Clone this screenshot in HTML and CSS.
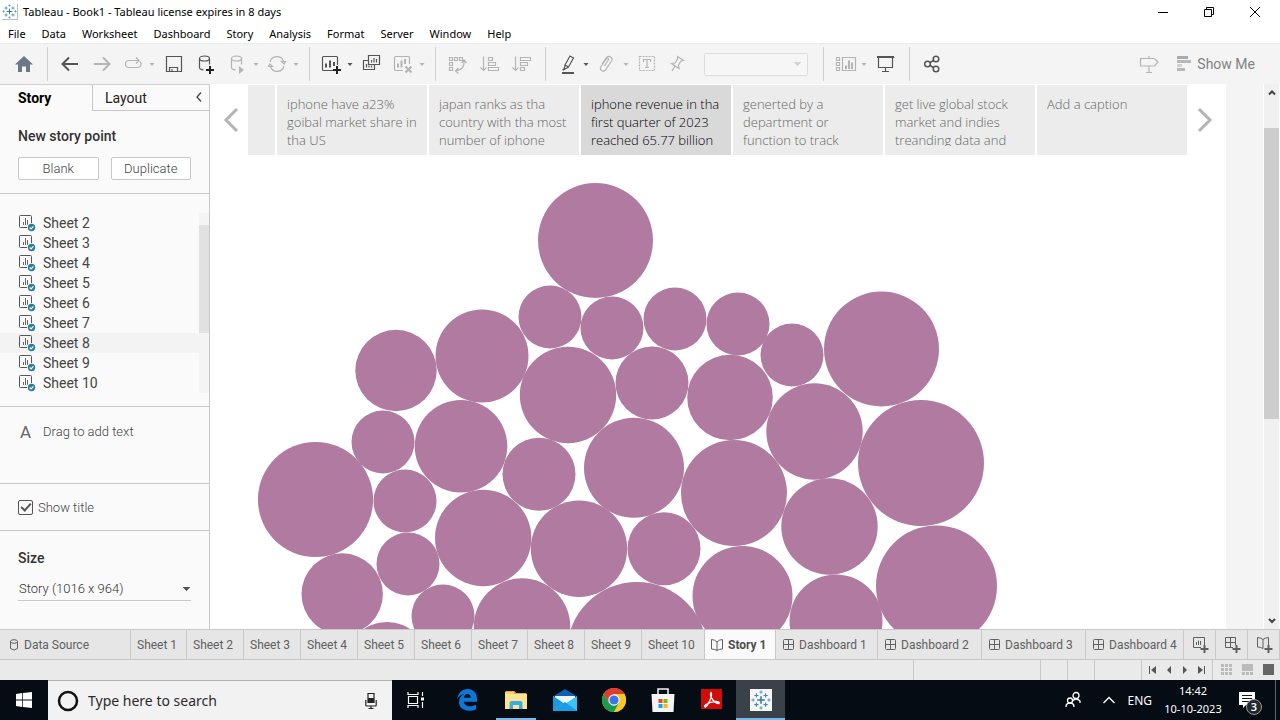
FILE: index.html
```html
<!DOCTYPE html>
<html lang="en">
<head>
<meta charset="utf-8">
<title>Tableau - Book1</title>
<link rel="stylesheet" href="styles.css">
</head>
<body>
<svg class="defs" aria-hidden="true">
  <defs>
    <symbol id="caret" viewBox="0 0 12 32"><path d="M3.500 15h5L6 18z" fill="currentColor"/></symbol>
    <symbol id="sheet" viewBox="0 0 18 18"><rect x="1.500" y="1.500" width="12" height="12" rx="1" fill="none" stroke="#555"/><path d="M5.500 8v3M7.500 4v7M9.500 6v5" stroke="#666" fill="none"/><circle cx="13.500" cy="13.500" r="4.500" fill="#fafafa"/><circle cx="13.500" cy="13.500" r="3.700" fill="#2f7d9e"/><path d="M11.700 13.500l1.400 1.400 2.300-2.500" fill="none" stroke="#fff" stroke-width="1.200"/></symbol>
    <symbol id="dash" viewBox="0 0 12 12"><rect x=".5" y=".5" width="10" height="10" rx="1"/><path d="M5.500 .5v10M.5 5.500h10"/></symbol>
    <symbol id="book" viewBox="0 0 12 12"><path d="M.5 .5q3 0 5.500 2.500Q8.500.5 11.500.5v9.500Q8.500 10 6 11.500 3.500 10 .5 10zM6 3v8.500"/></symbol>
    <symbol id="mark" viewBox="0 0 24 24"><g fill="none"><path d="M12 7.500v9M7.500 12h9" stroke="#2a7aa8" stroke-width="1.800"/><path d="M6.500 4v5M4 6.500h5M17.500 4v5M15 6.500h5M6.500 15v5M4 17.500h5M17.500 15v5M15 17.500h5" stroke="#4a86ad" stroke-width="1.300"/><path d="M12 .5v4M10 2.500h4M12 19.500v4M10 21.500h4M.5 12h4M2.500 10v4M19.500 12h4M21.500 10v4" stroke="#5d9cbd" stroke-width="1.200"/></g></symbol>
  </defs>
</svg>
<div class="app">
  <header class="titlebar">
    <svg class="logo" viewBox="0 0 24 24"><use href="#mark"/></svg>
    <h1 class="title">Tableau - Book1 - Tableau license expires in 8 days</h1>
    <div class="window-buttons">
      <button aria-label="Minimize"><svg viewBox="0 0 12 12"><path d="M1 6.500h10"/></svg></button>
      <button aria-label="Restore"><svg viewBox="0 0 12 12"><path d="M1.500 3.500h7v7h-7zM3.500 3.500v-2h7v7h-2"/></svg></button>
      <button aria-label="Close"><svg viewBox="0 0 12 12"><path d="M1 1l10 10M11 1L1 11"/></svg></button>
    </div>
  </header>
  <nav class="menubar">
    <button>File</button><button>Data</button><button>Worksheet</button><button>Dashboard</button><button>Story</button><button>Analysis</button><button>Format</button><button>Server</button><button>Window</button><button>Help</button>
  </nav>

  <div class="toolbar" role="toolbar" aria-label="Tools">
    <div class="group home">
      <button class="tool" aria-label="Start page"><svg viewBox="0 0 32 32"><path d="M16 8l9 8.500h-3V24h-4v-5.500h-4V24h-4v-7.500H7z" fill="#6c7886"/></svg></button>
    </div>
    <div class="group">
      <button class="tool dark" aria-label="Undo"><svg viewBox="0 0 32 32"><path d="M24 16H9M15 9.500L8.500 16l6.500 6.500" stroke-width="2"/></svg></button>
      <button class="tool" aria-label="Redo"><svg viewBox="0 0 32 32"><path d="M8 16h15M17 9.500l6.500 6.500-6.500 6.500" stroke-width="2"/></svg></button>
      <button class="tool snug" aria-label="Replay"><svg viewBox="0 0 32 32"><path d="M14 12.500h-3a3.500 3.500 0 0 0 0 7h9a3.500 3.500 0 0 0 2-6M13 12.500h8M18 9.500l3 3-3 3"/></svg></button>
      <button class="drop" aria-label="Replay options"><svg><use href="#caret"/></svg></button>
      <button class="tool dark" aria-label="Save"><svg viewBox="0 0 32 32"><path d="M8.500 8.500h15v15h-15zM11.500 23.500v-4h8v4M14 21v2.500"/></svg></button>
      <button class="tool dark" aria-label="New data source"><svg viewBox="0 0 32 32"><ellipse cx="14.500" cy="10.500" rx="5" ry="2.500"/><path d="M9.500 10.500v9q0 2 4 2.500M19.500 10.500v6"/><path d="M20 18v8M16 22h8" stroke="#222" stroke-width="2"/></svg></button>
      <button class="tool snug" aria-label="Pause updates"><svg viewBox="0 0 32 32"><ellipse cx="14.500" cy="10.500" rx="5" ry="2.500"/><path d="M9.500 10.500v9q0 2 4 2.500M19.500 10.500v6"/><path d="M17 18l5 4-5 4z" fill="currentColor" stroke="none"/></svg></button>
      <button class="drop" aria-label="Pause options"><svg><use href="#caret"/></svg></button>
      <button class="tool snug" aria-label="Refresh"><svg viewBox="0 0 32 32"><path d="M8 14a7 7 0 0 1 13.500-.5M22 18a7 7 0 0 1-13.500.5M19.500 13.500h4l-1.500 2.500zM6.500 18.500h4l-2.500-2.500z"/></svg></button>
      <button class="drop" aria-label="Refresh options"><svg><use href="#caret"/></svg></button>
    </div>
    <div class="group">
      <button class="tool snug dark" aria-label="New worksheet"><svg viewBox="0 0 32 32"><path d="M21.500 17V9.500q0-1-1-1h-13q-1 0-1 1v12q0 1 1 1H17"/><path d="M10 15.500v4M14 12.500v7M18 14v4" stroke-width="2"/><path d="M21 18v8M17 22h8" stroke="#222" stroke-width="2"/></svg></button>
      <button class="drop dark" aria-label="New worksheet options"><svg><use href="#caret"/></svg></button>
      <button class="tool dark" aria-label="Duplicate"><svg viewBox="0 0 32 32"><path d="M12.500 7.500h11v9h-11zM12 12.500H7.500v9h11V17M15.500 12v2.500M18 10v4.500M20.500 11v3.500M10.500 16v3.500M13 17.500v2M15.500 17.500v2"/></svg></button>
      <button class="tool snug" aria-label="Clear sheet"><svg viewBox="0 0 32 32"><path d="M21.500 16V9.500q0-1-1-1h-13q-1 0-1 1v12q0 1 1 1H15"/><path d="M10 15.500v4M13.500 12.500v7M17 11v5M17.500 18.500l6 6M23.500 18.500l-6 6" stroke-width="2"/></svg></button>
      <button class="drop" aria-label="Clear options"><svg><use href="#caret"/></svg></button>
    </div>
    <div class="group">
      <button class="tool" aria-label="Swap rows and columns"><svg viewBox="0 0 32 32"><path d="M7.500 9.500h3v3h-3zM12.500 9.500h3v3h-3zM17.500 9.500h3v3h-3zM7.500 14.500h3v3h-3zM7.500 19.500h3v3h-3zM22 12.500q1 9-8 10.500M19.500 15l2.500-3 2.500 3M16.500 20l-3 3 3 2.500"/></svg></button>
      <button class="tool" aria-label="Sort ascending"><svg viewBox="0 0 32 32"><path d="M9.500 8.500v14M6.500 19.500l3 3 3-3M14.500 9.500h4v3h-4zM14.500 14.500h7v3h-7zM14.500 19.500h10v3h-10z"/></svg></button>
      <button class="tool" aria-label="Sort descending"><svg viewBox="0 0 32 32"><path d="M9.500 8.500v14M6.500 19.500l3 3 3-3M14.500 9.500h10v3h-10zM14.500 14.500h7v3h-7zM14.500 19.500h4v3h-4z"/></svg></button>
    </div>
    <div class="group">
      <button class="tool snug dark" aria-label="Highlight"><svg viewBox="0 0 32 32"><path d="M13 17l5-9 3.500 2-5 9zM13 17l-1 4.500 4.500-2.500M10.500 22l1-1"/><path d="M10 25h12" stroke-width="2"/></svg></button>
      <button class="drop dark" aria-label="Highlight options"><svg><use href="#caret"/></svg></button>
      <button class="tool snug" aria-label="Group"><svg viewBox="0 0 32 32"><path d="M10 16l4-6q2-2.500 4.500-1t1 4l-6 9q-2 2-4 .5t-.5-4l5.500-8q2-1 2 1L12.500 18"/></svg></button>
      <button class="drop" aria-label="Group options"><svg><use href="#caret"/></svg></button>
      <button class="tool" aria-label="Show labels"><svg viewBox="0 0 32 32"><path d="M7.500 8.500h15v14h-15z" stroke-dasharray="2 1"/><path d="M11.500 14v-2.500h7V14M15 11.500v8M13 19.500h4"/></svg></button>
      <button class="tool snug" aria-label="Fix axes"><svg viewBox="0 0 32 32"><path d="M13.500 8.500l6 4-2.500.5-2.500 4 .5 3.500-7.500-5 3.500-.5 2.500-4zM11 18l-3 5"/></svg></button>
      <select class="fit" aria-label="Fit" disabled><option></option></select>
    </div>
    <div class="group">
      <button class="tool snug" aria-label="Show cards"><svg viewBox="0 0 32 32"><path d="M6.500 9.500h3v3h-3zM6.500 14.500h3v3h-3zM6.500 19.500h3v3h-3zM12.500 9.500h13v13h-13z"/><path d="M16 17.500v3.500M19 12.500V21M22 14.500V21" stroke-width="2"/></svg></button>
      <button class="drop" aria-label="Card options"><svg><use href="#caret"/></svg></button>
      <button class="tool dark" aria-label="Presentation mode"><svg viewBox="0 0 32 32"><path d="M7.500 9.500h17M8.500 10v9.500h14V10M15.500 19.500v4M12 23.500h7M15.500 8v2"/><path d="M7 9h17" stroke-width="2"/></svg></button>
    </div>
    <div class="share">
      <button class="tool dark" aria-label="Share"><svg viewBox="0 0 32 32"><g stroke-width="1.500"><circle cx="11.500" cy="16" r="2.800"/><circle cx="20" cy="11" r="2.800"/><circle cx="20" cy="21" r="2.800"/><path d="M14 14.500l3.500-2M14 17.500l3.500 2"/></g></svg></button>
    </div>
    <button class="tool guide" aria-label="Data guide"><svg viewBox="0 0 32 32"><path d="M7.500 10.500h14l3.500 3.500-3.500 4h-14zM16 8v2.500M16 18v6.500M13 24.500h6"/></svg></button>
    <button class="show-me"><svg viewBox="0 0 14 16"><path d="M0 0h11v3H0z" fill="#aaa"/><path d="M0 4h14v3H0zM0 12h8v3H0z" fill="#b8b8b8"/><path d="M0 8h5v3H0z" fill="#d2d2d2"/></svg>Show Me</button>
  </div>

  <main class="workspace">
    <aside class="side">
      <div class="side-tabs">
        <button class="side-tab active">Story</button>
        <button class="side-tab">Layout<svg viewBox="0 0 8 12"><path d="M6 .5L2 5l4 4.500"/></svg></button>
      </div>
      <section class="new-point">
        <h2>New story point</h2>
        <div class="pair"><button>Blank</button><button>Duplicate</button></div>
      </section>
      <section class="sheets">
        <ul>
          <li><svg><use href="#sheet"/></svg>Sheet 2</li>
          <li><svg><use href="#sheet"/></svg>Sheet 3</li>
          <li><svg><use href="#sheet"/></svg>Sheet 4</li>
          <li><svg><use href="#sheet"/></svg>Sheet 5</li>
          <li><svg><use href="#sheet"/></svg>Sheet 6</li>
          <li><svg><use href="#sheet"/></svg>Sheet 7</li>
          <li class="hover"><svg><use href="#sheet"/></svg>Sheet 8</li>
          <li><svg><use href="#sheet"/></svg>Sheet 9</li>
          <li><svg><use href="#sheet"/></svg>Sheet 10</li>
        </ul>
        <div class="list-scroll"><div class="list-thumb"></div></div>
      </section>
      <section class="drag"><span class="letter">A</span>Drag to add text</section>
      <section class="title-check"><input type="checkbox" id="show-title" checked><label for="show-title">Show title</label></section>
      <section class="size">
        <h2><label for="size">Size</label></h2>
        <select id="size"><option>Story (1016 x 964)</option></select>
      </section>
    </aside>

    <div class="story">
      <div class="navigator">
        <button class="arrow prev" aria-label="Previous"><svg viewBox="0 0 16 26"><path d="M14 2L3 13l11 11"/></svg></button>
        <div class="points">
          <button class="point stub" aria-label="Earlier point"></button>
          <button class="point"><span>iphone have a23% goibal market share in tha US</span></button>
          <button class="point"><span>japan ranks as tha country with tha most number of iphone</span></button>
          <button class="point current"><span>iphone revenue in tha first quarter of 2023 reached 65.77 billion</span></button>
          <button class="point"><span>generted by a department or function to track</span></button>
          <button class="point"><span>get live global stock market and indies treanding data and</span></button>
          <button class="point"><span>Add a caption</span></button>
        </div>
        <button class="arrow next" aria-label="Next"><svg viewBox="0 0 16 26"><path d="M2 2l11 11L2 24"/></svg></button>
      </div>
      <svg class="bubbles" viewBox="210 155 1016 474" role="img" aria-label="Packed bubbles">
        <g fill="#b07aa1">
          <circle cx="595.500" cy="240.500" r="57.500"/><circle cx="550" cy="317" r="31.500"/><circle cx="612" cy="328" r="31.500"/><circle cx="675" cy="319" r="31.500"/><circle cx="738" cy="324" r="31.500"/><circle cx="792" cy="355" r="31.500"/><circle cx="881.500" cy="349" r="57.500"/>
          <circle cx="396" cy="370.500" r="40.700"/><circle cx="482" cy="356" r="46.500"/><circle cx="568" cy="395" r="48.200"/><circle cx="652" cy="383" r="36.500"/><circle cx="730" cy="397.500" r="42.800"/><circle cx="814.500" cy="431.500" r="48.200"/><circle cx="921" cy="463" r="63"/>
          <circle cx="383" cy="442" r="31.500"/><circle cx="461" cy="446.200" r="46.300"/><circle cx="539" cy="474.300" r="36.500"/><circle cx="634" cy="467.800" r="50"/><circle cx="734" cy="493" r="53"/><circle cx="829.500" cy="526.500" r="48.200"/>
          <circle cx="315.500" cy="499.500" r="57.600"/><circle cx="405" cy="501" r="31.500"/><circle cx="483.200" cy="538" r="48.200"/><circle cx="579" cy="548.700" r="48.200"/><circle cx="664" cy="548.700" r="36.500"/><circle cx="742.500" cy="596" r="50"/><circle cx="936.500" cy="586" r="60.500"/>
          <circle cx="408" cy="564" r="31.500"/><circle cx="342.200" cy="594" r="40.700"/><circle cx="443" cy="616" r="31.500"/><circle cx="522" cy="626.500" r="48.200"/><circle cx="637" cy="652" r="70"/><circle cx="387" cy="663" r="41"/><circle cx="836" cy="621" r="46.500"/>
        </g>
      </svg>
    </div>
    <div class="scrollbar">
      <svg viewBox="0 0 16 16"><path d="M5 10.500l3-3 3 3"/></svg>
      <div class="track"><div class="thumb"></div></div>
      <svg viewBox="0 0 16 16"><path d="M5 6l3 3 3-3"/></svg>
    </div>
  </main>

  <nav class="tabs">
    <button class="tab source"><svg viewBox="0 0 12 12"><ellipse cx="5" cy="2.500" rx="3.500" ry="1.800"/><path d="M1.500 2.500v7Q5 12.500 8.500 9.500v-7"/></svg>Data Source</button>
    <button class="tab narrow">Sheet 1</button><button class="tab">Sheet 2</button><button class="tab">Sheet 3</button><button class="tab">Sheet 4</button><button class="tab">Sheet 5</button><button class="tab">Sheet 6</button><button class="tab narrow">Sheet 7</button><button class="tab">Sheet 8</button><button class="tab">Sheet 9</button><button class="tab wide">Sheet 10</button>
    <button class="tab selected"><svg><use href="#book"/></svg>Story 1</button>
    <button class="tab board first"><svg><use href="#dash"/></svg>Dashboard 1</button>
    <button class="tab board"><svg><use href="#dash"/></svg>Dashboard 2</button>
    <button class="tab board"><svg><use href="#dash"/></svg>Dashboard 3</button>
    <button class="tab board last"><svg><use href="#dash"/></svg>Dashboard 4</button>
    <button class="tab add" aria-label="New worksheet"><svg viewBox="0 0 16 16"><path d="M11.500 8V.5H.5v10H8M3.500 5v3M5.500 3.500V8M7.500 4v4"/><path d="M11.500 8v8M7.500 12h8" stroke-width="2"/></svg></button>
    <button class="tab add" aria-label="New dashboard"><svg viewBox="0 0 16 16"><path d="M10.500 8V.5H.5v10H8M5.500.5v10M.5 5.500h10"/><path d="M11.500 8v8M7.500 12h8" stroke-width="2"/></svg></button>
    <button class="tab add" aria-label="New story"><svg viewBox="0 0 16 16"><path d="M11.500 8V.5Q8.500.5 6 2.500 3.500.5.5.5V10q3 0 5.500 1.500V2.500"/><path d="M11.500 8v8M7.500 12h8" stroke-width="2"/></svg></button>
  </nav>

  <footer class="status">
    <div class="cell fill"></div><div class="cell long"></div><div class="cell small"></div><div class="cell small"></div><div class="cell medium"></div>
    <div class="cell steps">
      <button aria-label="First"><svg viewBox="0 0 16 12"><path d="M4 2h1v8H4zM11 2v8L6 6z"/></svg></button>
      <button aria-label="Previous tab"><svg viewBox="0 0 16 12"><path d="M10 2v8L6 6z"/></svg></button>
      <button aria-label="Next tab"><svg viewBox="0 0 16 12"><path d="M6 2v8l4-4z"/></svg></button>
      <button aria-label="Last"><svg viewBox="0 0 16 12"><path d="M11 2h1v8h-1zM5 2v8l5-4z"/></svg></button>
    </div>
    <div class="views">
      <button aria-label="Sheet sorter"><svg viewBox="0 0 12 12"><path fill="#bbb" d="M0 0h3v3H0zM4 0h3v3H4zM8 0h3v3H8zM0 4h3v3H0zM4 4h3v3H4zM8 4h3v3H8zM0 8h3v3H0zM4 8h3v3H4zM8 8h3v3H8z"/></svg></button>
      <button aria-label="Filmstrip"><svg viewBox="0 0 12 12"><path fill="#bbb" d="M0 0h11v7H0zM0 8h3v3H0zM4 8h3v3H4zM8 8h3v3H8z"/></svg></button>
      <button aria-label="Sheet view"><svg viewBox="0 0 12 12"><path fill="#666" d="M0 0h11v11H0z"/></svg></button>
    </div>
  </footer>

  <div class="taskbar">
    <button class="start" aria-label="Start"><svg viewBox="0 0 16 16"><path fill="#fff" d="M0 2l6.300-1v6.600H0zM7 .9L16 0v7.600H7zM0 8.400h6.300V15L0 14zM7 8.400h9V16l-9-1z"/></svg></button>
    <div class="search">
      <svg class="ring" viewBox="0 0 22 22"><circle cx="11" cy="11" r="9" fill="none" stroke="#111" stroke-width="2.500"/></svg>
      <input type="text" placeholder="Type here to search" aria-label="Search">
      <svg class="mic" viewBox="0 0 12 18"><path d="M3 1.500h6v9H3zM.8 8v5q0 1 1 1h8.400q1 0 1-1V8M6 14v2.500M3.500 16.500h5" fill="none" stroke="#222" stroke-width="1.200"/><path d="M3 6h6v5H3z" fill="#222"/></svg>
    </div>
    <button class="launch task-view" aria-label="Task view"><svg viewBox="0 0 24 24"><path d="M3.500 8.500h9v7h-9zM3 4v2.500h10V4M3 20v-2.500h10V20M17.500 4v4M17.500 14v6" fill="none" stroke="#fff" stroke-width="1.200"/><path d="M16 9.500h3v3h-3z" fill="#fff"/></svg></button>
    <div class="apps">
      <button class="launch" aria-label="Edge"><svg viewBox="0 0 24 24"><path fill="#0a79da" d="M2 11.500C3 5 7.500 1 12.500 1 18.500 1 22 5.300 22 11v2.700H8.800c.4 3.200 3.100 4.600 6.400 4.600 2.200 0 4.200-.6 5.800-1.500v4.500c-1.900 1-4.200 1.500-6.800 1.500-6 0-10.200-3.300-10.200-8.700 0-3.600 2-6.500 5.200-8-4 .6-5.800 2.800-7.200 5.400zM8.900 9.700h6.800c0-2.300-1.100-3.700-3.200-3.700s-3.400 1.500-3.600 3.700z"/></svg></button>
      <button class="launch open" aria-label="File Explorer"><svg viewBox="0 0 24 24"><path fill="#e8ab2e" d="M1.500 3h9l1.500 2h10.500v4h-21z"/><path fill="#ffe394" d="M1 6h22v15H1z"/><path fill="#f8d46b" d="M1 4h9v2H1z"/><path fill="#37aee3" d="M5.500 21v-6q0-2 2-2h9q2 0 2 2v6H15v-4H9v4z"/></svg></button>
      <button class="launch" aria-label="Mail"><svg viewBox="0 0 24 24"><path d="M0 8.500L12 1l12 7.500z" fill="#0c62b0"/><path d="M2 8h20v8H2z" fill="#eef5fa"/><path d="M0 8l12 8 12-8v15H0z" fill="#38c3f4"/><path d="M0 8l10 7L0 23z" fill="#1899e0"/><path d="M0 23l12-9 12 9z" fill="#1c9ce5"/></svg></button>
      <button class="launch" aria-label="Chrome"><svg viewBox="0 0 24 24"><circle cx="12" cy="12" r="12" fill="#f9c825"/><path fill="#df3b30" d="M1.600 6A12 12 0 0 1 22.400 6L17 9H12L7 15z"/><path fill="#199b50" d="M1.600 6A12 12 0 0 0 12 24l5-9-10 0z"/><path fill="#f9c825" d="M22.400 6H12v6l5 3-5 9A12 12 0 0 0 22.400 6z"/><circle cx="12" cy="12" r="5.700" fill="#fff"/><circle cx="12" cy="12" r="4.600" fill="#3579e6"/></svg></button>
      <button class="launch" aria-label="Store"><svg viewBox="0 0 24 24"><path d="M7 6V1h10v5" fill="none" stroke="#f5f5f5" stroke-width="1.500"/><path d="M.5 6h23l-1 18h-21z" fill="#f4f4f4"/><path fill="#e44b2c" d="M7.500 11h4v4h-4z"/><path fill="#7fb90b" d="M12.500 11h4v4h-4z"/><path fill="#1aa3ea" d="M7.500 16h4v4h-4z"/><path fill="#fdb813" d="M12.500 16h4v4h-4z"/></svg></button>
      <button class="launch" aria-label="Acrobat Reader"><svg viewBox="0 0 24 24"><path fill="#d40b0b" d="M1 1h21v20H1z"/><path d="M11 4.500q-1.500 3 1.500 7t6.500 4q1-2-3-2-6 0-10.500 3.500-2 2 0 2 2-1 4.500-7t1-7.500z" fill="none" stroke="#fff" stroke-width="1.300"/></svg></button>
      <button class="launch open active-app" aria-label="Tableau"><svg viewBox="0 0 24 24"><path fill="#f5f5f5" d="M1 1h22v22H1z"/><use href="#mark" x="2" y="2" width="20" height="20"/></svg></button>
    </div>
    <div class="tray">
      <svg class="tray-icon" viewBox="0 0 18 18"><g fill="none" stroke="#fff" stroke-width="1.300"><circle cx="12" cy="4.500" r="3"/><path d="M8.500 10q3.500-4 7.500 0v2"/><circle cx="6" cy="9.500" r="2.500"/><path d="M2 16q0-4 4-4t4 4"/></g></svg>
      <svg class="tray-icon" viewBox="0 0 18 18"><path d="M3.500 12L9 6.500l5.500 5.500" fill="none" stroke="#fff" stroke-width="1.400"/></svg>
      <span class="lang">ENG</span>
      <div class="clock"><span>14:42</span><span>10-10-2023</span></div>
      <button class="notice" aria-label="3 notifications"><svg viewBox="0 0 18 18"><path fill="#fff" d="M1 1h16v13H8l-3 3v-3H1z"/><path d="M4 4.500h10M4 7.500h10M4 10.500h7" stroke="#11161e"/></svg><span class="count">3</span></button>
    </div>
  </div>
</div>
</body>
</html>
```
FILE: styles.css
```css
* { box-sizing: border-box; }
body { margin: 0; font-family: Roboto, "Liberation Sans", sans-serif; color: #444; background: #fff; }
button { border: 0; padding: 0; margin: 0; background: none; font: inherit; color: inherit; white-space: nowrap; }
h1, h2, ul { margin: 0; padding: 0; font-weight: 400; list-style: none; }
svg { display: block; flex: none; }
.defs { position: absolute; width: 0; height: 0; }
.app { display: flex; flex-direction: column; height: 100vh; overflow: hidden; }

.titlebar { display: flex; align-items: center; height: 23px; padding-left: 2px; flex: none; font-family: "Noto Sans", sans-serif; color: #000; }
.logo { width: 16px; height: 16px; border-right: 1px solid #bbb; border-bottom: 1px solid #bbb; }
.title { flex: 1; margin-left: 5px; font-size: 11px; }
.window-buttons { display: flex; margin-right: 2px; }
.window-buttons button { display: grid; place-items: center; width: 46px; height: 22px; }
.window-buttons svg { width: 12px; height: 12px; fill: none; stroke: #000; }

.menubar { display: flex; gap: 16px; height: 20px; padding-left: 8px; flex: none; font-family: "Noto Sans", sans-serif; font-size: 11px; color: #000; }

.toolbar { display: flex; align-items: center; height: 41px; flex: none; background: #f4f4f4; border-top: 1px solid #ececec; color: #b4b4b4; }
.group { display: flex; align-items: center; height: 34px; padding: 0 7px 0 6px; border-right: 1px solid #d0d0d0; }
.home { padding: 0 7px 0 8px; }
.share { flex: 1; padding-left: 6px; }
.tool { display: grid; place-items: center; width: 32px; height: 32px; }
.tool svg { width: 32px; height: 32px; fill: none; stroke: currentColor; stroke-width: 1.2; }
.home svg { stroke: none; }
.snug { width: 28px; }
.drop svg { width: 12px; height: 32px; }
.dark { color: #555; }
.fit { width: 104px; height: 23px; margin: 0 8px 0 12px; border: 1px solid #d4d4d4; border-radius: 2px; appearance: none; background: linear-gradient(to bottom right, #c6c6c6 50%, transparent 0) no-repeat right 5px center / 4px 4px, linear-gradient(to bottom left, #c6c6c6 50%, transparent 0) no-repeat right 9px center / 4px 4px, #f7f7f7; }
.guide { margin-right: 12px; }
.show-me { display: flex; align-items: center; gap: 6px; margin-right: 25px; font-size: 14px; color: #828282; }
.show-me svg { width: 14px; height: 16px; }

.workspace { display: flex; flex: 1; min-height: 0; background: #f4f4f4; }
.side { display: flex; flex-direction: column; width: 210px; flex: none; background: #fafafa; border-right: 1px solid #c8c8c8; border-top: 1px solid #d0d0d0; font-weight: 300; }
.side section { border-bottom: 1px solid #c8c8c8; }
.side h2 { font-size: 14px; font-weight: 500; line-height: 20px; color: #333; }
.side-tabs { display: flex; height: 26px; flex: none; font-size: 14px; color: #222; }
.side-tab { flex: 1; display: flex; align-items: center; justify-content: space-between; padding: 0 6px 0 12px; border: solid #c8c8c8; border-width: 0 0 1px 1px; font-weight: 400; }
.side-tab.active { flex: none; width: 92px; padding-left: 18px; border: 0; font-weight: 700; color: #000; }
.side-tab svg { width: 8px; height: 12px; fill: none; stroke: #444; stroke-width: 1.3; }
.side .new-point { height: 83px; padding: 15px 18px 0; }
.pair { display: flex; gap: 12px; margin-top: 11px; }
.pair button { flex: 1; height: 23px; border: 1px solid #c8c8c8; border-radius: 2px; background: #fff; font-size: 13px; }
.side .sheets { display: flex; height: 213px; padding-top: 19px; }
.sheets ul { flex: 1; font-size: 14px; line-height: 20px; }
.sheets li { display: flex; align-items: center; gap: 7px; height: 20px; padding-left: 18px; }
.sheets li svg { width: 18px; height: 18px; }
.hover { background: #f3f3f3; }
.list-scroll { width: 10px; height: 180px; padding-top: 12px; background: #f4f4f4; }
.list-thumb { height: 108px; background: #e1e1e1; }
.side .drag { display: flex; align-items: flex-start; gap: 12px; height: 77px; padding: 15px 20px; font-size: 13px; line-height: 20px; }
.letter { font-size: 17px; font-weight: 400; color: #666; }
.side .title-check { display: flex; align-items: center; gap: 5px; height: 47px; padding-left: 18px; font-size: 13px; }
.title-check input { appearance: none; width: 15px; height: 15px; margin: 0; border: 1px solid #555; border-radius: 2px; display: grid; place-items: center; }
.title-check input::before { content: ""; width: 4px; height: 8px; margin-bottom: 2px; border: solid #555; border-width: 0 2px 2px 0; transform: rotate(42deg); }
.side .size { border: 0; padding: 17px 18px 0; }
.size select { appearance: none; display: block; width: 100%; height: 24px; margin-top: 9px; padding: 0 1px; border: 0; border-bottom: 1px solid #c8c8c8; font: 300 13px Roboto, sans-serif; color: #333; background: linear-gradient(to bottom right, #555 50%, transparent 0) no-repeat right 0 center / 4px 4px, linear-gradient(to bottom left, #555 50%, transparent 0) no-repeat right 4px center / 4px 4px; }

.story { flex: 0 1 1016px; min-width: 0; background: #fff; overflow: hidden; }
.navigator { display: flex; height: 71px; padding-top: 1px; }
.arrow { display: grid; place-items: center; flex: none; }
.prev { width: 38px; padding-left: 3px; }
.next { width: 39px; padding-right: 4px; }
.arrow svg { width: 16px; height: 26px; fill: none; stroke: #b4b4b4; stroke-width: 3; }
.points { display: flex; gap: 2px; flex: 1; min-width: 0; }
.point { display: flex; flex: 1; min-width: 0; padding: 10px 10px 8px; background: #ececec; color: #666; font-family: "Open Sans", "Noto Sans", sans-serif; font-size: 13px; font-weight: 300; line-height: 18px; text-align: left; white-space: normal; }
.point span { height: 51px; overflow: hidden; }
.stub { flex: none; width: 27px; }
.current { background: #d9d9d9; color: #000; }
.bubbles { width: 1016px; height: 474px; }
.scrollbar { display: flex; flex-direction: column; align-items: center; width: 17px; margin-left: auto; background: #f0f0f0; border-left: 1px solid #fff; border-right: 1px solid #fff; }
.scrollbar svg { width: 16px; height: 16px; fill: none; stroke: #444; stroke-width: 2; }
.track { flex: 1; width: 15px; padding-top: 28px; }
.thumb { height: 60%; background: #cdcdcd; }

.tabs { display: flex; height: 31px; flex: none; border: solid #c8c8c8; border-width: 1px 0; background: #e6e6e6; font-size: 12px; color: #606060; }
.tab { display: flex; align-items: center; gap: 5px; width: 57px; padding-left: 6px; border-right: 1px solid #c8c8c8; flex: none; overflow: hidden; }
.tab svg { width: 12px; height: 12px; fill: none; stroke: #606060; }
.narrow { width: 56px; }
.wide { width: 63px; }
.source { width: 131px; gap: 3px; padding-left: 9px; }
.selected { width: 71px; background: #fafafa; font-weight: 700; color: #4e4e4e; }
.board { width: 104px; gap: 4px; padding-left: 7px; }
.first { width: 102px; }
.last { flex: 1; }
.add { width: 32px; padding-left: 9px; }
.add svg { width: 16px; height: 16px; }

.status { display: flex; height: 20px; flex: none; background: #eaeaea; }
.cell { border-right: 1px solid #c8c8c8; }
.fill { flex: 1; }
.long { width: 127px; }
.small { width: 27px; }
.medium { width: 47px; }
.steps { display: flex; align-items: center; width: 71px; padding-left: 3px; }
.steps svg { width: 16px; height: 12px; fill: #555; }
.views { display: flex; align-items: center; gap: 9px; width: 67px; padding-left: 8px; }
.views svg { width: 12px; height: 12px; }

.taskbar { display: flex; height: 40px; flex: none; background: #050c14; color: #fff; font-family: "Noto Sans", sans-serif; }
.start { display: grid; place-items: center; width: 48px; }
.start svg { width: 16px; height: 16px; }
.search { display: flex; align-items: center; width: 344px; padding: 0 15px 0 9px; background: #f2f2f2; border-top: 1px solid #b4b4b4; }
.ring { width: 22px; height: 22px; }
.search input { flex: 1; min-width: 0; margin-left: 9px; padding: 0; border: 0; background: none; font: 14px "Noto Sans", sans-serif; }
.search input::placeholder { color: #2b2b2b; opacity: 1; }
.mic { width: 12px; height: 18px; }
.apps { display: flex; }
.launch { display: grid; place-items: center; width: 49px; }
.launch svg { width: 24px; height: 24px; }
.task-view { width: 50px; }
.open { background: linear-gradient(#76b9ed, #76b9ed) no-repeat center bottom / 40px 2px; }
.active-app { background: linear-gradient(#76b9ed, #76b9ed) no-repeat center bottom / 100% 2px, #3b4148; }
.tray { display: flex; align-items: center; margin-left: auto; margin-right: 4px; border-right: 1px solid #666; font-size: 12px; }
.tray-icon { width: 18px; height: 18px; margin-right: 18px; }
.tray-icon + .lang { margin-left: -9px; }
.clock { display: flex; flex-direction: column; align-items: center; width: 82px; font-size: 11px; line-height: 18px; }
.notice { position: relative; width: 41px; height: 40px; padding-left: 4px; }
.notice svg { width: 18px; height: 18px; }
.count { position: absolute; left: 12px; top: 19px; width: 16px; height: 16px; border: 1px solid #999; border-radius: 50%; background: #23272e; font-size: 11px; line-height: 14px; text-align: center; font-weight: 600; }
```
